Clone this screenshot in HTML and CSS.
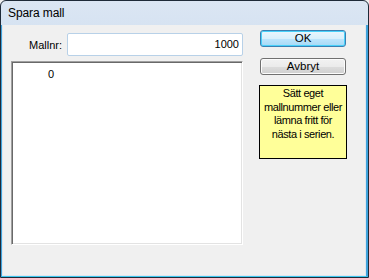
FILE: index.html
```html
<!DOCTYPE html>
<html lang="sv">
  <head>
    <meta charset="UTF-8" />
    <title>Spara mall</title>
    <link rel="stylesheet" href="styles.css">
  </head>
  <body>
    <div class="window">
      <div class="titlebar">Spara mall</div>
      <div class="frame">
        <div class="client">
          <div class="left-col">
            <div class="field-row">
              <label for="mallnr" class="field-label">Mallnr:</label>
              <div class="textbox" id="mallnr">1000</div>
            </div>
            <div class="listbox">
              <div class="list-row"><span class="list-num">0</span></div>
            </div>
          </div>
          <div class="right-col">
            <button class="btn btn-default">OK</button>
            <button class="btn">Avbryt</button>
            <div class="note">Sätt eget mallnummer eller lämna fritt för nästa i serien.</div>
          </div>
        </div>
      </div>
    </div>
  </body>
</html>
```

FILE: styles.css
```css
html, body {
  margin: 0;
  padding: 0;
  background: #f0f0f0;
}

body {
  font-family: 'Liberation Sans', Arial, sans-serif;
  font-size: 11px;
  color: #000;
}

.window {
  width: 369px;
  height: 278px;
  box-sizing: border-box;
  border: 1px solid #1e2a38;
  border-radius: 6px 6px 0 0;
  background: linear-gradient(#dbe6f3, #bdd1e9 60%, #b7cde6);
  display: flex;
  flex-direction: column;
  overflow: hidden;
}

.titlebar {
  height: 24px;
  line-height: 24px;
  padding-left: 7px;
  font-size: 12px;
  color: #000;
  letter-spacing: -0.1px;
}

.frame {
  flex: 1;
  display: flex;
  border: 1px solid #3fa3dc;
  border-top: none;
  border-bottom-color: #3cc6ee;
  border-right-width: 2px;
}

.client {
  flex: 1;
  display: flex;
  background: #f0f0f0;
  border: 1px solid #dfe6ee;
  border-top: none;
  padding: 5px 0 0 8px;
}

.left-col {
  width: 232px;
  display: flex;
  flex-direction: column;
  padding-top: 3px;
}

.field-row {
  display: flex;
  align-items: center;
  height: 23px;
}

.field-label {
  width: 51px;
  padding-right: 5px;
  text-align: right;
}

.textbox {
  flex: 1;
  height: 21px;
  line-height: 21px;
  border: 1px solid #b8d1e8;
  border-radius: 2px;
  background: #fff;
  text-align: right;
  padding-right: 3px;
}

.listbox {
  margin-top: 5px;
  height: 184px;
  box-sizing: border-box;
  background: #fff;
  border: 1px solid;
  border-color: #a0a0a0 #fff #fff #a0a0a0;
  box-shadow: inset 1px 1px #696969, inset -1px -1px #e3e3e3;
}

.list-row {
  padding-top: 6px;
}

.list-num {
  display: inline-block;
  width: 42px;
  text-align: right;
}

.right-col {
  margin-left: 16px;
  width: 88px;
  display: flex;
  flex-direction: column;
  align-items: center;
}

.btn {
  width: 86px;
  height: 17px;
  padding: 0;
  font-family: inherit;
  font-size: 11.5px;
  line-height: 15px;
  color: #000;
  border: 1px solid #707070;
  border-radius: 3px;
  background: linear-gradient(#f2f2f2, #ebebeb 50%, #dddddd 50%, #cfcfcf);
  box-shadow: inset 0 0 0 1px #fcfcfc;
}

.btn + .btn {
  margin-top: 11px;
}

.btn-default {
  border-color: #3c7fb1;
  background: linear-gradient(#eaf6fd, #d9f0fc 50%, #bee6fd 50%, #a7d9f5);
  box-shadow: inset 0 0 0 1px #48d1fa;
}

.note {
  margin-top: 10px;
  width: 88px;
  height: 74px;
  box-sizing: border-box;
  border: 1px solid #000;
  background: #ffff99;
  text-align: center;
  line-height: 13.5px;
  padding: 1px 2px 0;
  letter-spacing: -0.4px;
}
```
